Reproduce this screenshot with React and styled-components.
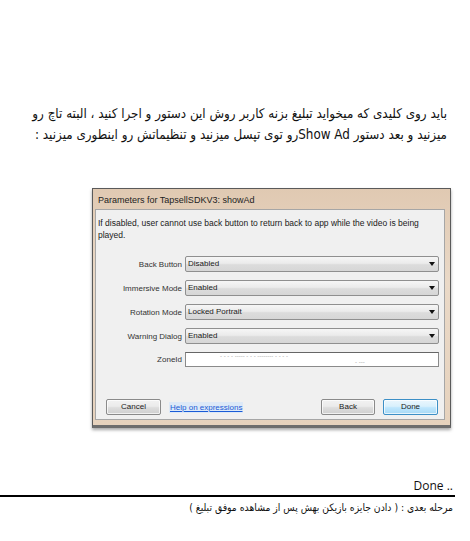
import React from 'react';
import styled, { createGlobalStyle } from 'styled-components';

const GlobalStyle = createGlobalStyle`
  html, body {
    margin: 0;
    padding: 0;
    background: #fff;
  }
`;

const App = () => {
  return (
    <>
      <GlobalStyle />
      <Page>
        <Intro>
          باید روی کلیدی که میخواید تبلیغ بزنه کاربر روش این دستور و اجرا کنید ، البته تاچ رو
          <br />
          میزنید و بعد دستور  Show Adرو توی تپسل میزنید و تنظیماتش رو اینطوری میزنید :
        </Intro>

        <Figure>
          <Window>
            <TitleBar>Parameters for TapsellSDKV3: showAd</TitleBar>
            <Body>
              <Hint>
                If disabled, user cannot use back button to return back to app while the video is being
                <br />
                played.
              </Hint>
              <Form>
                <Label>Back Button</Label>
                <Select>Disabled<Arrow /></Select>
                <Label>Immersive Mode</Label>
                <Select>Enabled<Arrow /></Select>
                <Label>Rotation Mode</Label>
                <Select>Locked Portrait<Arrow /></Select>
                <Label>Warning Dialog</Label>
                <Select>Enabled<Arrow /></Select>
                <Label>ZoneId</Label>
                <TextInput>
                  <Blur>- - - - ----- - - - -------- - - - -</Blur>
                  <Blur $right>- ---</Blur>
                </TextInput>
              </Form>
              <Footer>
                <Button $w={55}>Cancel</Button>
                <HelpLink>Help on expressions</HelpLink>
                <Spacer />
                <Button $w={54}>Back</Button>
                <Button $w={55} $primary>Done</Button>
              </Footer>
            </Body>
          </Window>
        </Figure>

        <DoneLine>Done ..</DoneLine>
        <Rule />
        <NextStep>مرحله بعدی : ( دادن جایزه بازیکن بهش پس از مشاهده موفق تبلیغ )</NextStep>
      </Page>
    </>
  );
};

const persian = `'DejaVu Sans Condensed', 'DejaVu Sans', sans-serif`;

const Page = styled.div`
  width: 455px;
  padding-top: 103px;
`;

const Intro = styled.p`
  margin: 0;
  padding-right: 8px;
  direction: rtl;
  text-align: right;
  white-space: nowrap;
  font-family: ${persian};
  font-size: 13.3px;
  line-height: 21px;
  color: #111;
`;

const Figure = styled.div`
  margin: 43px 0 0 92px;
  width: 359px;
  box-shadow: 0 2px 3px rgba(0, 0, 0, 0.35);
`;

const Window = styled.div`
  display: flex;
  flex-direction: column;
  border: 1px solid #5a5a5a;
  border-bottom: 3px solid #6d6d6d;
  background: linear-gradient(180deg, #e0c9b2 0%, #ead9c7 40%, #e6d2bd 100%);
  padding: 0 5px 5px 2px;
  font-family: 'Liberation Sans', Arial, sans-serif;
  color: #1a1a1a;
`;

const TitleBar = styled.div`
  height: 20px;
  line-height: 22px;
  padding-left: 3px;
  font-size: 9px;
  color: #222;
`;

const Body = styled.div`
  display: flex;
  flex-direction: column;
  background: #f0f0f0;
  border: 1px solid #a6a6a6;
  padding: 7px 6px 4px 2px;
  height: 211px;
  box-sizing: border-box;
`;

const Hint = styled.div`
  font-size: 8.5px;
  line-height: 12px;
  white-space: nowrap;
`;

const Form = styled.div`
  display: grid;
  grid-template-columns: 84px 254px;
  column-gap: 3px;
  row-gap: 8px;
  align-items: center;
  margin-top: 15px;
`;

const Label = styled.div`
  text-align: right;
  font-size: 8px;
  color: #333;
`;

const Select = styled.div`
  position: relative;
  height: 16px;
  box-sizing: border-box;
  border: 1px solid #8f8f8f;
  border-radius: 2px;
  background: linear-gradient(180deg, #f6f6f6 0%, #ebebeb 45%, #dcdcdc 55%, #d6d6d6 100%);
  padding-left: 2px;
  font-size: 8px;
  line-height: 14px;
`;

const Arrow = styled.span`
  position: absolute;
  right: 3px;
  top: 5px;
  width: 0;
  height: 0;
  border-left: 3px solid transparent;
  border-right: 3px solid transparent;
  border-top: 4px solid #111;
`;

const TextInput = styled.div`
  display: flex;
  flex-direction: column;
  height: 15px;
  box-sizing: border-box;
  border: 1px solid #8a8a8a;
  border-top-color: #666;
  background: #fff;
  padding: 0 4px;
  font-size: 6px;
  line-height: 6px;
  color: #9a9a9a;
`;

const Blur = styled.span`
  padding-left: ${(p) => (p.$right ? '165px' : '30px')};
  white-space: nowrap;
`;

const Footer = styled.div`
  display: flex;
  align-items: center;
  margin-top: auto;
  padding-left: 8px;
  gap: 8px;
`;

const Spacer = styled.div`
  flex: 1;
`;

const Button = styled.div`
  width: ${(p) => p.$w}px;
  height: 16px;
  box-sizing: border-box;
  border: 1px solid ${(p) => (p.$primary ? '#3c8fc6' : '#8a8a8a')};
  border-radius: 2px;
  background: ${(p) =>
    p.$primary
      ? 'linear-gradient(180deg, #eaf6fd 0%, #d9f0fc 45%, #bee6fd 55%, #a7d9f5 100%)'
      : 'linear-gradient(180deg, #f2f2f2 0%, #ebebeb 45%, #dddddd 55%, #cfcfcf 100%)'};
  box-shadow: inset 0 0 0 1px rgba(255, 255, 255, 0.7);
  text-align: center;
  font-size: 8px;
  line-height: 14px;
`;

const HelpLink = styled.span`
  font-size: 8px;
  color: #1a5bd6;
  text-decoration: underline;
  background: #dde9f7;
  padding: 1px 1px;
`;

const DoneLine = styled.div`
  margin-top: 50px;
  text-align: right;
  padding-right: 2px;
  font-family: 'Open Sans', sans-serif;
  font-size: 12px;
  line-height: 16px;
  color: #111;
`;

const Rule = styled.hr`
  margin: 1px 0 0;
  border: 0;
  border-top: 2px solid #000;
`;

const NextStep = styled.p`
  margin: 0;
  padding-right: 2px;
  direction: rtl;
  text-align: right;
  font-family: ${persian};
  font-size: 10.3px;
  line-height: 20px;
  color: #111;
`;

export default App;
